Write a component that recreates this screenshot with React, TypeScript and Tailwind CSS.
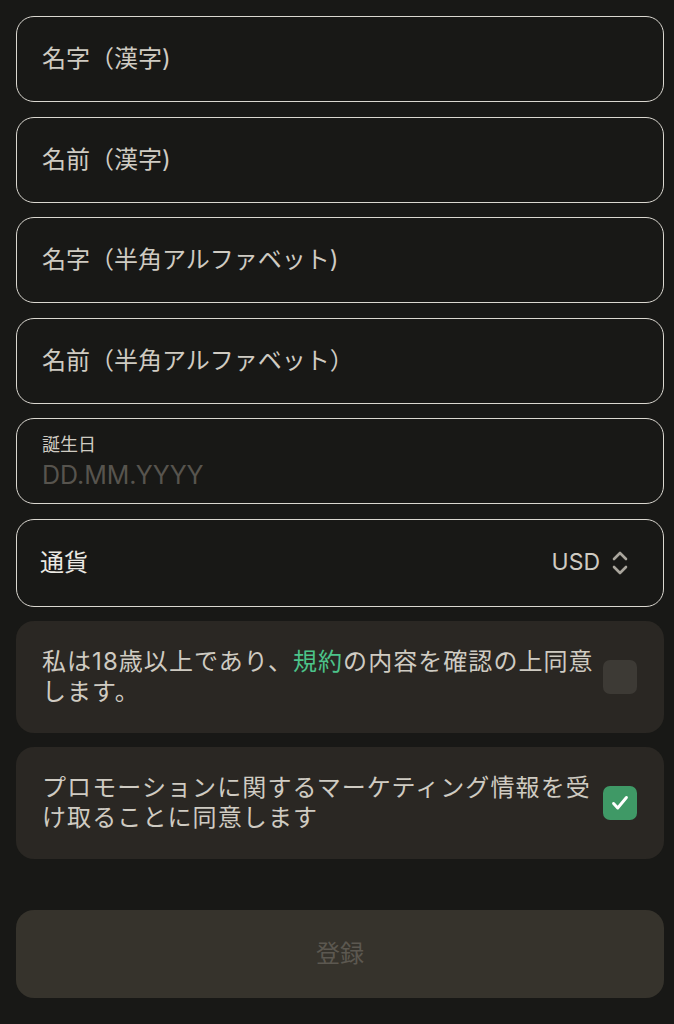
import React from "react";

const font = { fontFamily: '"Inter", "Noto Sans CJK JP", sans-serif' };

function Field({ label }: { label: string }) {
  return (
    <div className="h-[86px] w-[648px] rounded-[18px] border-[1.5px] border-[#dad7d0] flex items-center pl-[25px]">
      <span className="text-[24px] text-[#cfcbc2] leading-none">{label}</span>
    </div>
  );
}

function Check({ checked }: { checked: boolean }) {
  return (
    <div
      className={
        "w-[34px] h-[34px] rounded-[7px] flex items-center justify-center shrink-0 " +
        (checked ? "bg-[#3f9966]" : "bg-[#3d3a35]")
      }
    >
      {checked && (
        <svg width="22" height="22" viewBox="0 0 24 24" fill="none" stroke="#ffffff" strokeWidth="3.2" strokeLinecap="round" strokeLinejoin="round">
          <path d="M5 12.5l4.5 5L19 6" />
        </svg>
      )}
    </div>
  );
}

export default function App() {
  return (
    <div className="min-h-[1024px] bg-[#181816] pt-[16px] pl-[16px]" style={font}>
      <div className="flex flex-col gap-[14.6px]">
        <Field label="名字（漢字)" />
        <Field label="名前（漢字)" />
        <Field label="名字（半角アルファベット)" />
        <Field label="名前（半角アルファベット）" />
        <div className="h-[86px] w-[648px] rounded-[18px] border-[1.5px] border-[#dad7d0] flex flex-col justify-start pl-[25px] pt-[15px]">
          <span className="text-[18px] leading-[22px] text-[#cfcbc2]">誕生日</span>
          <span className="mt-[4px] text-[25px] leading-[30px] text-[#57544e]">DD.MM.YYYY</span>
        </div>
      </div>
      <div className="mt-[14.6px] h-[88px] w-[648px] rounded-[18px] border-[1.5px] border-[#dad7d0] flex items-center justify-between pl-[23px] pr-[33px]">
        <span className="text-[24px] leading-none text-[#ebe9e3]">通貨</span>
        <div className="flex items-center gap-[10px]">
          <span className="text-[23px] leading-none text-[#cfcbc2]">USD</span>
          <svg width="20" height="26" viewBox="0 0 20 26" fill="none" stroke="#a9a59c" strokeWidth="2.6" strokeLinecap="round" strokeLinejoin="round">
            <path d="M4 9l6-6 6 6" />
            <path d="M4 17l6 6 6-6" />
          </svg>
        </div>
      </div>
      <div className="mt-[14px] flex flex-col gap-[14px]">
        <div className="h-[112px] w-[648px] rounded-[18px] bg-[#2a2723] flex items-center justify-between pl-[26px] pr-[27px]">
          <p className="text-[24px] leading-[30px] text-[#cfcbc2] whitespace-nowrap tracking-[1.05px]">
            私は18歳以上であり、<span className="text-[#4cc38a]">規約</span>の内容を確認の上同意
            <br />
            します。
          </p>
          <Check checked={false} />
        </div>
        <div className="h-[112px] w-[648px] rounded-[18px] bg-[#2a2723] flex items-center justify-between pl-[26px] pr-[27px]">
          <p className="text-[24px] leading-[30px] text-[#cfcbc2] whitespace-nowrap tracking-[1.1px]">
            プロモーションに関するマーケティング情報を受
            <br />
            け取ることに同意します
          </p>
          <Check checked={true} />
        </div>
      </div>
      <button className="mt-[51px] h-[88px] w-[648px] rounded-[18px] bg-[#36332c] flex items-center justify-center">
        <span className="text-[24px] leading-none text-[#5c5850]">登録</span>
      </button>
    </div>
  );
}
